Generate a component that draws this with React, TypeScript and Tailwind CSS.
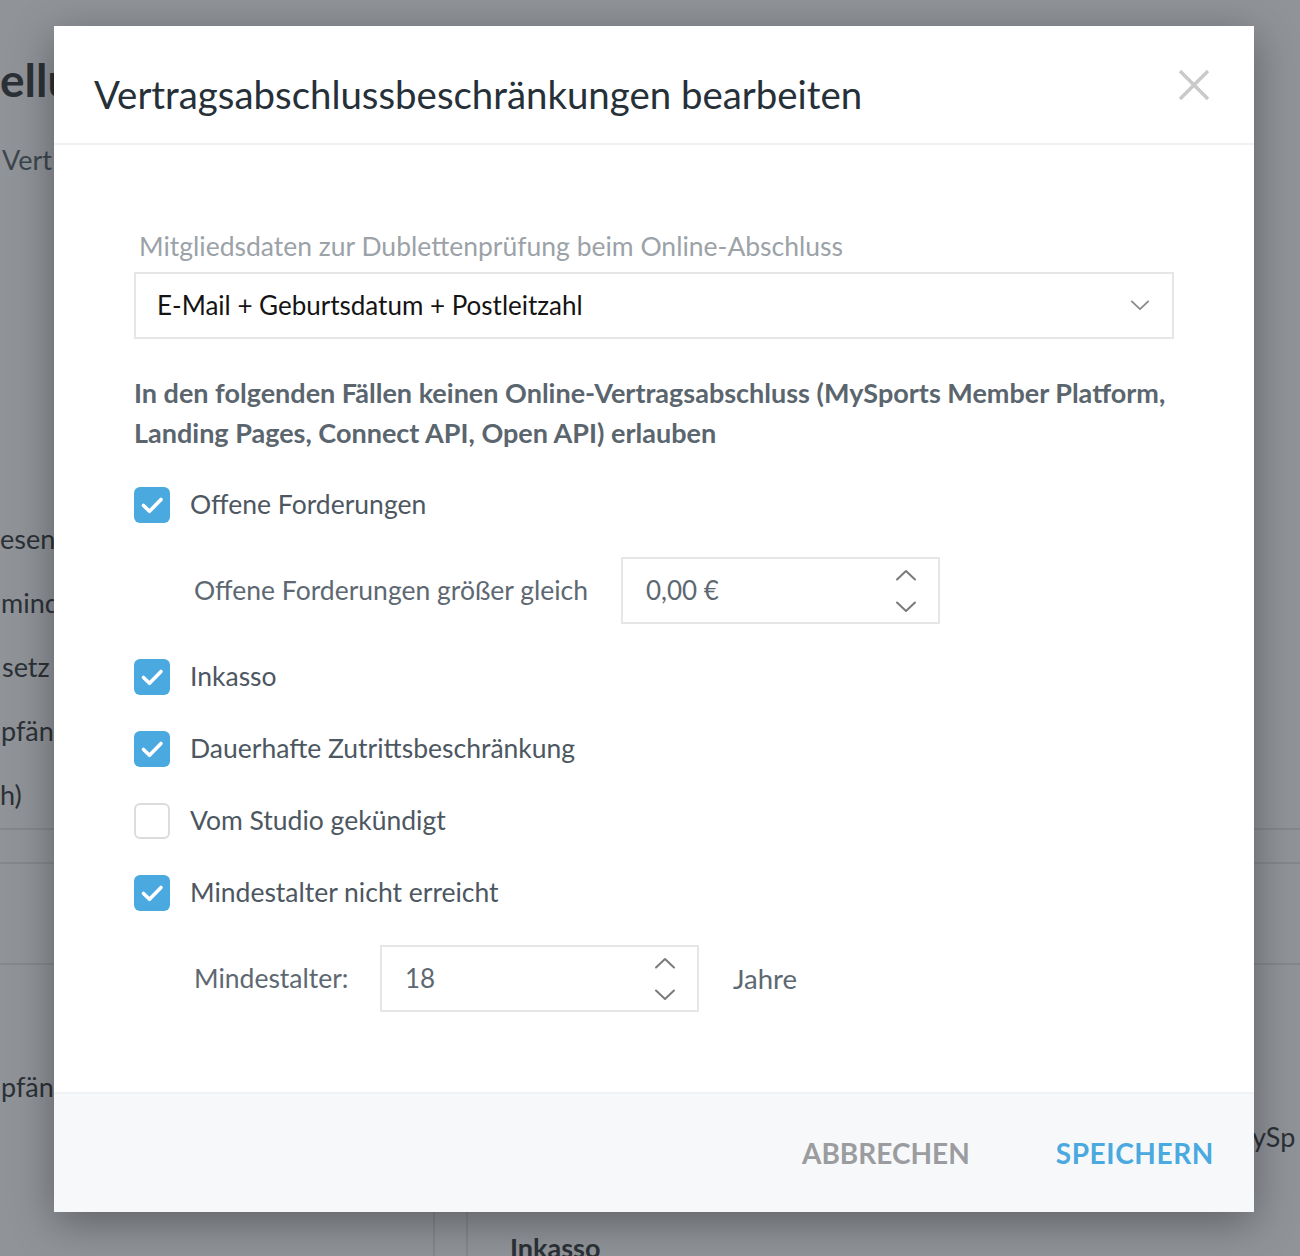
const FONT = "font-['Lato','Liberation_Sans',sans-serif]";

const Check = () => (
  <svg viewBox="0 0 36 36" className="w-[36px] h-[36px]">
    <path d="M9.5 18.5l6 5.8L27 12.5" fill="none" stroke="#ffffff" strokeWidth="3.6" strokeLinecap="round" strokeLinejoin="round" />
  </svg>
);

const Checkbox = ({ checked }: { checked: boolean }) =>
  checked ? (
    <div className="w-[36px] h-[36px] rounded-[6px] bg-[#4aa9df] flex items-center justify-center shrink-0">
      <Check />
    </div>
  ) : (
    <div className="w-[36px] h-[36px] rounded-[6px] border-2 border-[#dcdcdc] bg-white shrink-0" />
  );

const Chevron = ({ up, className }: { up?: boolean; className?: string }) => (
  <svg viewBox="0 0 22 12" className={className}>
    <path
      d={up ? "M2 10.5L11 2l9 8.5" : "M2 1.5L11 10l9-8.5"}
      fill="none"
      stroke="currentColor"
      strokeWidth="2"
      strokeLinecap="round"
      strokeLinejoin="round"
    />
  </svg>
);

const Spinner = () => (
  <div className="flex flex-col items-center gap-[20px] text-[#7a7a7a]">
    <Chevron up className="w-[22px] h-[12px]" />
    <Chevron className="w-[22px] h-[12px]" />
  </div>
);

const NumberInput = ({ value }: { value: string }) => (
  <div className="w-[319px] h-[67px] border-2 border-[#e6e6e6] flex items-center justify-between pl-[23px] pr-[21px]">
    <span className="text-[26px] text-[#5d6872]">{value}</span>
    <Spinner />
  </div>
);

const CheckRow = ({ checked, label }: { checked: boolean; label: string }) => (
  <div className="flex items-center gap-[20px] h-[36px]">
    <Checkbox checked={checked} />
    <span className="text-[26.5px] text-[#4d5761]">{label}</span>
  </div>
);

// fragments of the page that peeks out left of the dialog
const BgLine = ({ text, className }: { text: string; className?: string }) => (
  <div className={"whitespace-nowrap h-[40px] leading-[40px] " + (className ?? "")}>{text}</div>
);

export default function App() {
  return (
    <div className={"relative w-[1300px] h-[1256px] overflow-hidden bg-[#909398] " + FONT}>
      {/* page behind the dialog */}
      <div className="flex flex-col text-[#2b3136] text-[27px]">
        <BgLine text="ellu" className="mt-[52px] pl-0 text-[46px] font-bold h-[56px] leading-[56px]" />
        <BgLine text="Vert" className="mt-[32px] pl-[2px] text-[#3c464e]" />
        <div className="h-[339px]" />
        <BgLine text="esen" className="pl-0" />
        <BgLine text="mind" className="mt-[24px] pl-[1px]" />
        <BgLine text="setz" className="mt-[24px] pl-[2px]" />
        <BgLine text="pfän" className="mt-[24px] pl-[1px]" />
        <BgLine text="h)" className="mt-[24px] pl-0" />
        <div className="mt-[13px] h-[2px] bg-[#84888d]" />
        <div className="mt-[32px] h-[2px] bg-[#84888d]" />
        <div className="mt-[99px] h-[2px] bg-[#84888d]" />
        <BgLine text="pfän" className="mt-[102px] pl-[1px]" />
      </div>
      <div className="absolute left-[1252px] top-[1117px] text-[27px] text-[#2b3136] whitespace-nowrap">ySp</div>
      <div className="absolute left-[433px] top-[1212px] w-[2px] h-[44px] bg-[#84888d]" />
      <div className="absolute left-[466px] top-[1212px] w-[2px] h-[44px] bg-[#84888d]" />
      <div className="absolute left-[510px] top-[1228px] text-[27px] font-bold text-[#2b3136]">Inkasso</div>

      {/* dialog */}
      <div className="absolute left-[54px] top-[26px] w-[1200px] h-[1186px] bg-white flex flex-col shadow-[0_10px_40px_rgba(0,0,0,0.35)]">
        <div className="h-[119px] flex items-start justify-between pl-[40px] pr-[44px] border-b-2 border-[#f1f2f3]">
          <h1 className="mt-[45px] text-[38.4px] leading-[46px] text-[#263038] font-normal">
            Vertragsabschlussbeschränkungen bearbeiten
          </h1>
          <svg viewBox="0 0 32 32" className="mt-[43px] w-[32px] h-[32px]">
            <path d="M2 2L30 30M30 2L2 30" stroke="#c9c9c9" strokeWidth="3.4" />
          </svg>
        </div>

        <div className="flex-1 flex flex-col px-[80px] pt-[85px]">
          <label className="pl-[5px] text-[26.5px] leading-[32px] text-[#9ba2a8]">
            Mitgliedsdaten zur Dublettenprüfung beim Online-Abschluss
          </label>
          <div className="mt-[10px] h-[67px] border-2 border-[#e6e6e6] flex items-center justify-between pl-[21px] pr-[22px]">
            <span className="text-[26px] text-[#141414]">E-Mail + Geburtsdatum + Postleitzahl</span>
            <Chevron className="w-[20px] h-[11px] text-[#8a8a8a]" />
          </div>

          <p className="mt-[34px] text-[27px] leading-[40px] font-bold text-[#5a656e] whitespace-nowrap">
            In den folgenden Fällen keinen Online-Vertragsabschluss (MySports Member Platform,
            <br />
            Landing Pages, Connect API, Open API) erlauben
          </p>

          <div className="mt-[34px]">
            <CheckRow checked label="Offene Forderungen" />
          </div>
          <div className="mt-[34px] pl-[60px] flex items-center gap-[33px]">
            <span className="text-[26.5px] text-[#5d6872]">Offene Forderungen größer gleich</span>
            <NumberInput value="0,00 €" />
          </div>

          <div className="mt-[35px] flex flex-col gap-[36px]">
            <CheckRow checked label="Inkasso" />
            <CheckRow checked label="Dauerhafte Zutrittsbeschränkung" />
            <CheckRow checked={false} label="Vom Studio gekündigt" />
            <CheckRow checked label="Mindestalter nicht erreicht" />
          </div>

          <div className="mt-[34px] pl-[60px] flex items-center">
            <span className="w-[186px] text-[26.5px] text-[#5d6872]">Mindestalter:</span>
            <NumberInput value="18" />
            <span className="ml-[34px] text-[27.5px] text-[#5d6872]">Jahre</span>
          </div>
        </div>

        <div className="h-[120px] bg-[#f7f8fa] border-t-2 border-[#f1f2f3] flex items-center justify-end gap-[86px] pr-[40px]">
          <button className="text-[28px] font-bold text-[#9b9ca0] uppercase">Abbrechen</button>
          <button className="text-[28px] font-bold tracking-[0.6px] text-[#4aa9df] uppercase">Speichern</button>
        </div>
      </div>
    </div>
  );
}
